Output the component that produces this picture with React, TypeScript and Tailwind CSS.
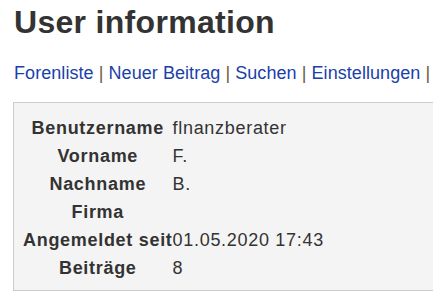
import React from "react";

export default function App() {
  const rows: [string, string][] = [
    ["Benutzername", "flnanzberater"],
    ["Vorname", "F."],
    ["Nachname", "B."],
    ["Firma", ""],
    ["Angemeldet seit", "01.05.2020 17:43"],
    ["Beiträge", "8"],
  ];
  const links = ["Forenliste", "Neuer Beitrag", "Suchen", "Einstellungen"];
  return (
    <div className="w-[433px] h-[294px] overflow-hidden bg-white pl-[13px] text-[#333]" style={{ fontFamily: '"Liberation Sans", Arial, sans-serif' }}>
      <h1 className="pt-[4px] pl-[1px] text-[32px] leading-[37px] font-bold tracking-[0.3px] text-[#333]">User information</h1>
      <div className="mt-[22px] pl-[1px] text-[18px] leading-[21px] tracking-[0.06px] whitespace-nowrap">
        {links.map((l) => (
          <React.Fragment key={l}>
            <span className="text-[#1a3faa]">{l}</span> <span className="text-[#6b5a45]">|</span>{" "}
          </React.Fragment>
        ))}
      </div>
      <div className="mt-[18px] w-[440px] border border-[#ccc] bg-[#f4f4f4] pl-[9px] pt-[11px] pb-[8px]">
        <table className="border-collapse text-[18px] leading-[20px] tracking-[0.7px]">
          <tbody>
            {rows.map(([k, v]) => (
              <tr key={k}>
                <th className="p-0 py-[4px] text-center font-bold text-[#333]">{k}</th>
                <td className="p-0 py-[4px] text-left text-[#333]">{v}</td>
              </tr>
            ))}
          </tbody>
        </table>
      </div>
    </div>
  );
}
